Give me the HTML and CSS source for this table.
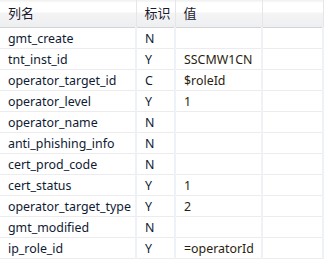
FILE: index.html
```html
<!DOCTYPE html>
<html>
<head>
<meta charset="utf-8">
<link rel="stylesheet" href="styles.css">
</head>
<body>
<table class="grid">
  <colgroup>
    <col class="c-name"><col class="c-flag"><col class="c-val"><col class="c-extra">
  </colgroup>
  <thead>
    <tr><th>列名</th><th>标识</th><th>值</th><th></th></tr>
  </thead>
  <tbody>
    <tr><td>gmt_create</td><td>N</td><td></td><td></td></tr>
    <tr><td>tnt_inst_id</td><td>Y</td><td class="v">SSCMW1CN</td><td></td></tr>
    <tr><td>operator_target_id</td><td>C</td><td class="v">$roleId</td><td></td></tr>
    <tr><td>operator_level</td><td>Y</td><td class="v">1</td><td></td></tr>
    <tr><td>operator_name</td><td>N</td><td></td><td></td></tr>
    <tr><td>anti_phishing_info</td><td>N</td><td></td><td></td></tr>
    <tr><td>cert_prod_code</td><td>N</td><td></td><td></td></tr>
    <tr><td>cert_status</td><td>Y</td><td class="v">1</td><td></td></tr>
    <tr><td>operator_target_type</td><td>Y</td><td class="v">2</td><td></td></tr>
    <tr><td>gmt_modified</td><td>N</td><td></td><td></td></tr>
    <tr><td>ip_role_id</td><td>Y</td><td class="v">=operatorId</td><td></td></tr>
  </tbody>
</table>
</body>
</html>
```
FILE: styles.css
```css
html, body {
  margin: 0;
  padding: 0;
  background: #ffffff;
}
body {
  font-family: "Noto Sans", "Noto Sans CJK SC", sans-serif;
  font-size: 12.4px;
  color: #0f1a33;
}
.grid {
  border-collapse: collapse;
  table-layout: fixed;
  width: 323px;
}
.c-name { width: 136px; }
.c-flag { width: 39px; }
.c-val { width: 87px; }
.c-extra { width: 61px; }
thead th {
  height: 27px;
  padding: 0 0 1px 8px;
  text-align: left;
  font-weight: normal;
  font-family: "Noto Sans CJK SC", sans-serif;
  font-size: 13px;
  color: #1a1a2e;
  background: linear-gradient(#efefef 0, #ffffff 3px, #ffffff 12px, #f4f4f5 13px, #eeeff1 26px);
  border-right: 1px solid #e6e6e8;
  border-bottom: 1px solid #d4d4d6;
  box-sizing: border-box;
}
tbody td {
  height: 20px;
  padding: 1px 0 0 8px;
  white-space: nowrap;
  overflow: hidden;
  border-bottom: 1px solid #ececee;
  border-right: 2px solid #eef1f7;
  line-height: 19px;
  box-sizing: border-box;
}
tbody td.v {
  color: #2a1e10;
}
```
